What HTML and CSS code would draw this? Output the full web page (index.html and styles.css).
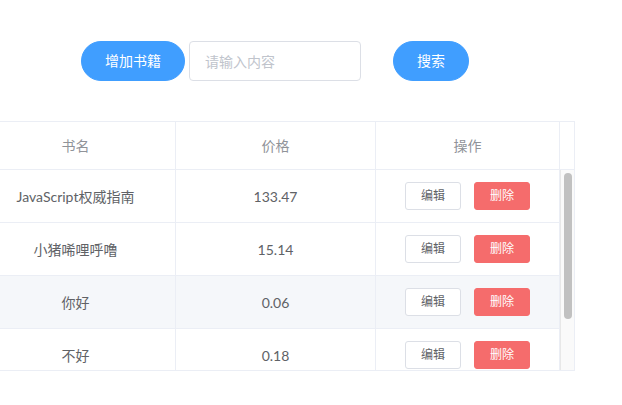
FILE: index.html
```html
<!DOCTYPE html>
<html lang="zh">
<head>
<meta charset="utf-8">
<link rel="stylesheet" href="styles.css">
</head>
<body>
<div class="page">
  <div class="toolbar">
    <button class="btn btn-round btn-primary">增加书籍</button>
    <input class="search-input" type="text" placeholder="请输入内容">
    <button class="btn btn-round btn-primary search-btn">搜索</button>
  </div>
  <div class="table">
    <div class="thead">
      <div class="th">书名</div>
      <div class="th">价格</div>
      <div class="th">操作</div>
      <div class="th gutter"></div>
    </div>
    <div class="tbody">
      <div class="rows">
        <div class="tr">
          <div class="td">JavaScript权威指南</div>
          <div class="td">133.47</div>
          <div class="td"><button class="btn btn-mini">编辑</button><button class="btn btn-mini btn-danger">删除</button></div>
        </div>
        <div class="tr">
          <div class="td">小猪唏哩呼噜</div>
          <div class="td">15.14</div>
          <div class="td"><button class="btn btn-mini">编辑</button><button class="btn btn-mini btn-danger">删除</button></div>
        </div>
        <div class="tr hover">
          <div class="td">你好</div>
          <div class="td">0.06</div>
          <div class="td"><button class="btn btn-mini">编辑</button><button class="btn btn-mini btn-danger">删除</button></div>
        </div>
        <div class="tr">
          <div class="td">不好</div>
          <div class="td">0.18</div>
          <div class="td"><button class="btn btn-mini">编辑</button><button class="btn btn-mini btn-danger">删除</button></div>
        </div>
      </div>
      <div class="scrollbar"><div class="thumb"></div></div>
    </div>
  </div>
</div>
</body>
</html>
```

FILE: styles.css
```css
* { box-sizing: border-box; }
html, body {
  margin: 0;
  padding: 0;
  background: #fff;
}
body {
  font-family: Lato, "Noto Sans CJK SC", sans-serif;
  font-size: 14px;
  color: #606266;
  overflow: hidden;
}
.page {
  width: 600px;
  margin-left: -25px;
  padding-top: 41px;
}
.toolbar {
  display: flex;
  justify-content: center;
  align-items: center;
  height: 40px;
}
.btn {
  font-family: inherit;
  font-size: 14px;
  line-height: 14px;
  border: 1px solid #dcdfe6;
  background: #fff;
  color: #606266;
  cursor: pointer;
  margin: 0;
  white-space: nowrap;
}
.btn-round {
  border-radius: 20px;
  padding: 12px 23px;
  height: 40px;
}
.btn-primary {
  background: #409eff;
  border-color: #409eff;
  color: #fff;
}
.search-input {
  width: 172px;
  height: 40px;
  margin-left: 4px;
  border: 1px solid #dcdfe6;
  border-radius: 4px;
  padding: 0 15px;
  font-family: inherit;
  font-size: 14px;
  color: #606266;
  outline: none;
}
.search-input::placeholder { color: #c0c4cc; }
.search-btn { margin-left: 32px; }

.table {
  margin-top: 40px;
  width: 600px;
  border-left: 1px solid #ebeef5;
  border-top: 1px solid #ebeef5;
  border-bottom: 1px solid #ebeef5;
}
.tr {
  display: grid;
  grid-template-columns: 200px 200px 184px;
}
.thead {
  display: grid;
  grid-template-columns: 200px 200px 184px 15px;
}
.th {
  height: 48px;
  border-right: 1px solid #ebeef5;
  border-bottom: 1px solid #ebeef5;
  color: #909399;
  display: flex;
  align-items: center;
  justify-content: center;
  line-height: 23px;
}
.tbody {
  display: flex;
  height: 200px;
  overflow: hidden;
}
.rows {
  width: 584px;
  overflow: hidden;
}
.tr.hover .td { background: #f5f7fa; }
.td {
  height: 53px;
  border-right: 1px solid #ebeef5;
  border-bottom: 1px solid #ebeef5;
  display: flex;
  align-items: center;
  justify-content: center;
  line-height: 23px;
}
.btn-mini {
  font-size: 12px;
  line-height: 12px;
  padding: 7px 15px;
  height: 28px;
  width: 56px;
  border-radius: 3px;
}
.btn-mini + .btn-mini { margin-left: 13px; }
.btn-danger {
  background: #f56c6c;
  border-color: #f56c6c;
  color: #fff;
}
.scrollbar {
  width: 15px;
  height: 200px;
  background: #fafafa;
  border-left: 1px solid #e8e8e8;
  border-right: 1px solid #ebeef5;
  padding: 3px 2px 0 3px;
}
.thumb {
  width: 8px;
  height: 146px;
  background: #c1c1c1;
  border-radius: 4px;
}
```
